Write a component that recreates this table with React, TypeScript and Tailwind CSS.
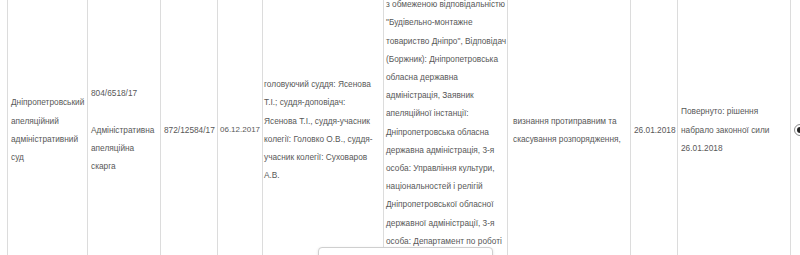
import React from 'react';

const cell = 'border-x border-[#dcdcdc] px-[3px] align-middle whitespace-nowrap';

export default function App() {
  return (
    <div className="relative w-[800px] h-[255px] overflow-hidden bg-white font-['Liberation_Sans',Arial,sans-serif] text-[8.3px] leading-[18.2px] text-[#585858]">
      <div className="ml-[7px] -mt-[31px]">
        <table className="border-collapse table-fixed w-[813px]">
          <colgroup>
            <col className="w-[80px]" />
            <col className="w-[73px]" />
            <col className="w-[57px]" />
            <col className="w-[45px]" />
            <col className="w-[121px]" />
            <col className="w-[124px]" />
            <col className="w-[123px]" />
            <col className="w-[47px]" />
            <col className="w-[113px]" />
            <col className="w-[30px]" />
          </colgroup>
          <tbody>
            <tr>
              <td className={cell}>
                Дніпропетровський
                <br />
                апеляційний
                <br />
                адміністративний
                <br />
                суд
              </td>
              <td className={cell}>
                804/6518/17
                <br />
                <br />
                Адміністративна
                <br />
                апеляційна
                <br />
                скарга
              </td>
              <td className={cell}>872/12584/17</td>
              <td className={cell + ' pl-[2px] text-[8px]'}>06.12.2017</td>
              <td className={cell + ' pl-[1px]'}>
                головуючий суддя: Ясенова
                <br />
                Т.І.; суддя-доповідач:
                <br />
                Ясенова Т.І., суддя-учасник
                <br />
                колегії: Головко О.В., суддя-
                <br />
                учасник колегії: Суховаров
                <br />
                А.В.
              </td>
              <td className={cell + ' pt-2 pb-1 pl-[2px]'}>
                Позивач (Заявник): Товариство
                <br />
                з обмеженою відповідальністю
                <br />
                "Будівельно-монтажне
                <br />
                товариство Дніпро", Відповідач
                <br />
                (Боржник): Дніпропетровська
                <br />
                обласна державна
                <br />
                адміністрація, Заявник
                <br />
                апеляційної інстанції:
                <br />
                Дніпропетровська обласна
                <br />
                державна адміністрація, 3-я
                <br />
                особа: Управління культури,
                <br />
                національностей і релігій
                <br />
                Дніпропетровської обласної
                <br />
                державної адміністрації, 3-я
                <br />
                особа: Департамент по роботі
                <br />
                з активами
                <br />
                облдержадміністрації
              </td>
              <td className={cell + ' pl-[5px]'}>
                визнання протиправним та
                <br />
                скасування розпорядження,
              </td>
              <td className={cell}>26.01.2018</td>
              <td className={cell}>
                Повернуто: рішення
                <br />
                набрало законної сили
                <br />
                26.01.2018
              </td>
              <td className={cell}>
                <span className="flex h-[12px] w-[12px] items-center justify-center rounded-full border border-[#8a8a8a] bg-white">
                  <span className="h-[6px] w-[6px] rounded-full bg-[#222]" />
                </span>
              </td>
            </tr>
          </tbody>
        </table>
      </div>

      <div className="absolute left-[318px] top-[247px] h-[40px] w-[175px] rounded-[4px] border border-[#cfcfcf] bg-white shadow-[0_1px_3px_rgba(0,0,0,0.12)]" />
    </div>
  );
}
